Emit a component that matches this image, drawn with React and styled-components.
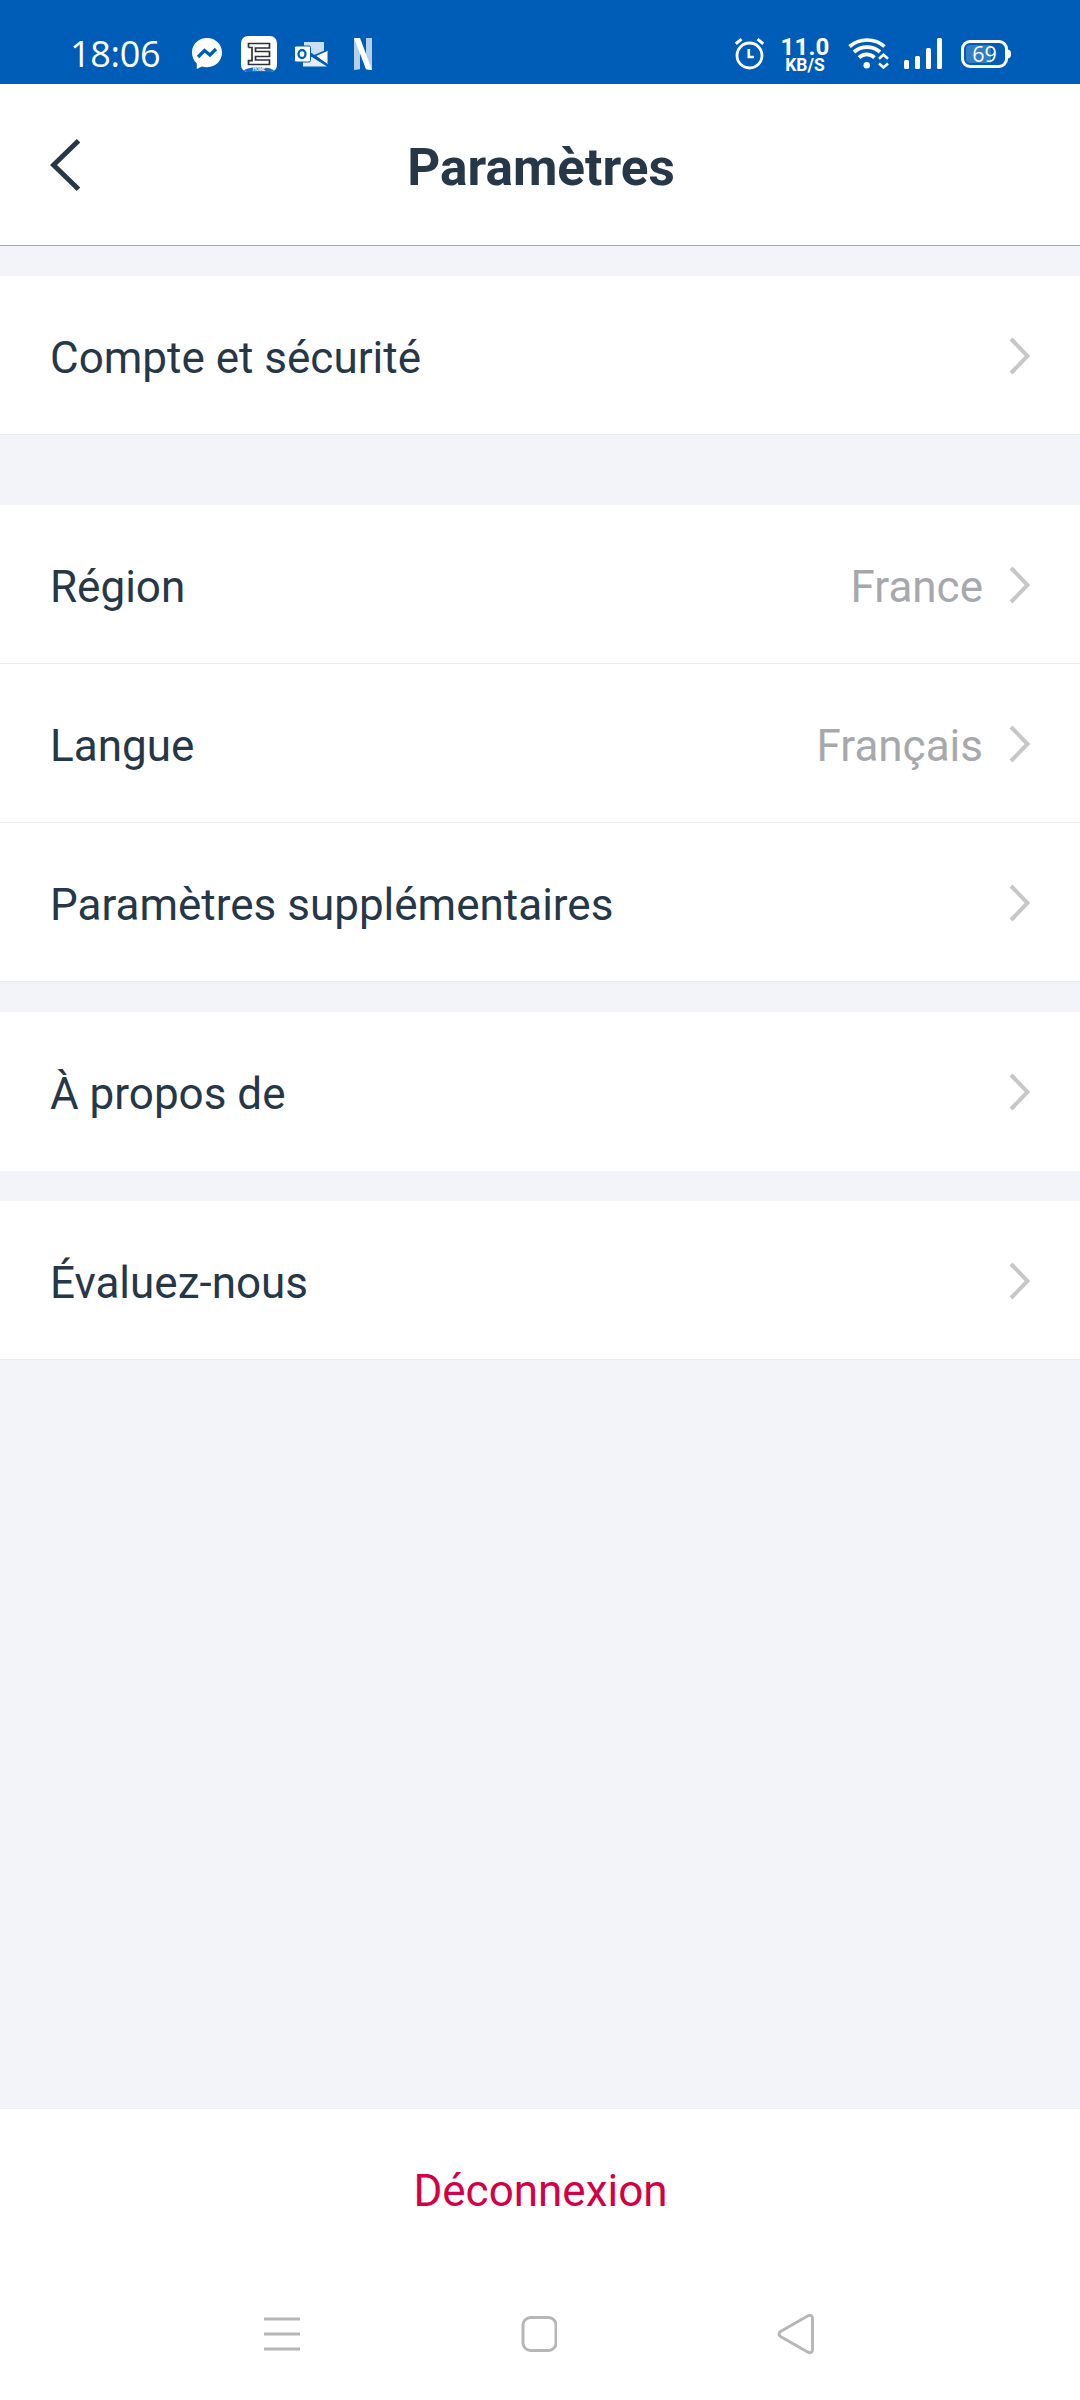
import React from 'react';
import styled, { createGlobalStyle } from 'styled-components';

const GlobalStyle = createGlobalStyle`
  * { box-sizing: border-box; }
  body {
    margin: 0;
    background: #f3f4f9;
    font-family: Roboto, "Liberation Sans", sans-serif;
  }
`;

const Screen = styled.div`
  display: flex;
  flex-direction: column;
  width: 1080px;
  height: 2400px;
  background: #f3f4f9;
  color: #263747;
  overflow: hidden;
`;

const StatusBar = styled.div`
  display: flex;
  justify-content: space-between;
  flex: none;
  height: 84px;
  padding: 24px 69px 0 70px;
  background: #005db7;
  color: #fff;
`;

const StatusGroup = styled.div`
  display: flex;
  align-items: center;
  height: 60px;
`;

const Clock = styled.span`
  width: 122px;
  font-family: "Open Sans", sans-serif;
  font-size: 36px;
  line-height: 60px;
  letter-spacing: -0.3px;
  white-space: nowrap;
`;

const StatusIcon = styled.svg`
  display: block;
  flex: none;
  margin-right: ${(p) => p.$gap || 0}px;
`;

const Speed = styled.div`
  display: flex;
  flex-direction: column;
  align-items: center;
  width: 50px;
  margin-right: 18px;
  font-weight: 700;
`;

const SpeedValue = styled.span`
  font-size: 24px;
  line-height: 22px;
  letter-spacing: 0.2px;
`;

const SpeedUnit = styled.span`
  font-size: 17.5px;
  line-height: 15px;
`;

const Header = styled.header`
  display: grid;
  grid-template-columns: 100px 1fr 100px;
  align-items: center;
  flex: none;
  height: 162px;
  border-bottom: 1px solid #a3a4a6;
  background: #fff;
`;

const BackButton = styled.button`
  display: flex;
  padding: 0 0 0 50px;
  border: 0;
  background: none;
`;

const Title = styled.h1`
  margin: 0;
  padding: 6px 0 0 2px;
  font-size: 51.3px;
  line-height: 60px;
  font-weight: 700;
  text-align: center;
`;

const Section = styled.section`
  flex: none;
  margin-top: ${(p) => p.$gap}px;
  background: #fff;
`;

const Row = styled.div`
  display: flex;
  align-items: center;
  height: 159px;
  padding: 0 50px;
  border-bottom: 1px solid ${(p) => (p.$plain ? '#fff' : '#eaebec')};
`;

const Label = styled.span`
  flex: 1;
  padding-top: 6px;
  font-size: 44px;
  line-height: 52px;
`;

const Value = styled.span`
  padding-top: 6px;
  margin-right: 26px;
  font-size: 44px;
  line-height: 52px;
  color: #a7a8ac;
`;

const ChevronIcon = styled.svg`
  display: block;
  flex: none;
  margin-bottom: -1px;
`;

const Footer = styled.footer`
  display: flex;
  flex-direction: column;
  flex: none;
  height: 292px;
  margin-top: auto;
  border-top: 1px solid #efeff2;
  background: #fff;
`;

const LogoutButton = styled.button`
  height: 160px;
  padding: 3px 0 0 1px;
  border: 0;
  background: none;
  color: #d40045;
  font-family: inherit;
  font-size: 44px;
  line-height: 52px;
`;

const NavBar = styled.nav`
  display: flex;
  justify-content: space-between;
  align-items: center;
  height: 130px;
  padding: 0 265px 0 264px;
`;

const NavIcon = styled.svg`
  display: block;
  fill: none;
  stroke: #b7b7b7;
  stroke-width: 3;
`;

const Chevron = () => (
  <ChevronIcon width="21" height="38" viewBox="0 0 21 38" fill="none">
    <path d="M2 2 18.5 19 2 36" stroke="#c7c7c7" strokeWidth="4" />
  </ChevronIcon>
);

const MessengerIcon = () => (
  <StatusIcon $gap={19} width="30" height="32" viewBox="0 0 30 32">
    <path fill="#fff" d="M15 0C6.500 0 0 6.200 0 14.600c0 4.400 1.800 8.200 4.800 10.800V31l5-2.600c1.600.5 3.400.8 5.200.8 8.500 0 15-6.200 15-14.600S23.500 0 15 0Z" />
    <path fill="none" stroke="#005db7" strokeWidth="3.200" d="m6 19 6.500-6.500 5.500 4.500 6-6" />
  </StatusIcon>
);

const BadgeText = styled.text`
  font: italic 700 4.500px Roboto, sans-serif;
  fill: #fff;
`;

const ShopIcon = () => (
  <StatusIcon $gap={17} width="36" height="36" viewBox="0 0 36 36">
    <rect width="36" height="36" rx="7" fill="#fff" />
    <path
      fill="none"
      stroke="#28323e"
      strokeWidth="1.700"
      d="M7.500 11.500v-4h21v4.500h-14v3.500h14v5h-14v3.500h14v4.500h-21v-3.800h3.500v-13.200H7.500"
    />
    <path fill="#1769c2" d="M3 34.500C7 30 29 30 33 34.500 31.500 36 30 36 29 36H7c-1 0-2.500 0-4-1.500Z" />
    <BadgeText x="18" y="35.300" textAnchor="middle">HOME</BadgeText>
  </StatusIcon>
);

const OutlookIcon = () => (
  <StatusIcon $gap={26} width="34" height="27" viewBox="0 0 34 27">
    <path fill="#fff" fillOpacity=".8" d="M10 1h20v10l-9 4-11-7Z" />
    <path fill="#fff" fillOpacity=".9" d="M9 16h9l3 2 12 7.500H9Z" />
    <path fill="#fff" d="m22 14.800 11.500-5.300v14Z" />
    <path fill="none" stroke="#005db7" strokeWidth="1.600" d="m16 12 17.500 12M20 15l13.500-6" />
    <rect x=".5" y="5" width="16" height="16" rx="1.500" fill="#fff" stroke="#005db7" strokeWidth="1" />
    <ellipse cx="8" cy="13" rx="3.500" ry="4" fill="none" stroke="#005db7" strokeWidth="2.300" />
  </StatusIcon>
);

const StreamIcon = () => (
  <StatusIcon width="18" height="32" viewBox="0 0 18 32">
    <path fill="#b3cfea" d="M0 0h6v31.300L0 32ZM12 0h6v32l-6-.7Z" />
    <path fill="#fff" d="M0 0h6l12 32-6-.7Z" />
  </StatusIcon>
);

const AlarmIcon = () => (
  <StatusIcon $gap={16} width="29" height="32" viewBox="0 0 29 32" fill="none" stroke="#fff">
    <circle cx="14.500" cy="17.500" r="12.500" strokeWidth="2.800" />
    <path strokeWidth="3" d="M.8 5.800 6.500 1.200M28.200 5.800l-5.700-4.600" />
    <path strokeWidth="2.600" d="M13.800 11v8H19" />
  </StatusIcon>
);

const WifiIcon = () => (
  <StatusIcon $gap={15} width="41" height="32" viewBox="0 0 41 32" fill="none" stroke="#fff">
    <path strokeWidth="3.700" d="M1.500 8.500c10-8.700 25.500-8.700 35 0M6 14c7.500-6.500 18.500-6.500 26 0M11 19.600c4.500-4.200 11-4.200 15.500 0" />
    <circle cx="18.700" cy="27.300" r="3.200" fill="#fff" stroke="none" />
    <path strokeWidth="2.600" d="m31 20.800 4.500-4 4.500 4M31 25.500l4.500 4 4.500-4" />
  </StatusIcon>
);

const SignalIcon = () => (
  <StatusIcon $gap={19} width="38" height="32" viewBox="0 0 38 32" fill="#fff">
    <rect x="0" y="22" width="5" height="9" rx="1.500" />
    <rect x="11" y="18" width="5" height="13" rx="1.500" />
    <rect x="22" y="10" width="5" height="21" rx="1.500" />
    <rect x="33" y="0" width="5" height="31" rx="1.500" />
  </StatusIcon>
);

const BatteryText = styled.text`
  font: 400 21.500px "Open Sans", sans-serif;
  fill: #fff;
`;

const BatteryIcon = () => (
  <StatusIcon width="50" height="28" viewBox="0 0 50 28">
    <rect x="1.500" y="1.500" width="44" height="25" rx="7.500" fill="none" stroke="#fff" strokeWidth="3" />
    <path fill="#337dc5" d="M9 5h21v18H9a4 4 0 0 1-4-4V9a4 4 0 0 1 4-4Z" />
    <path fill="#fff" d="M46 9.500c2.500 0 4 1 4 4.500s-1.500 4.500-4 4.500Z" />
    <BatteryText x="23.500" y="21.800" textAnchor="middle">69</BatteryText>
  </StatusIcon>
);

const SECTIONS = [
  { gap: 30, rows: [{ label: 'Compte et sécurité' }] },
  {
    gap: 70,
    rows: [
      { label: 'Région', value: 'France' },
      { label: 'Langue', value: 'Français' },
      { label: 'Paramètres supplémentaires' },
    ],
  },
  { gap: 30, rows: [{ label: 'À propos de', plain: true }] },
  { gap: 30, rows: [{ label: 'Évaluez-nous' }] },
];

export default function App() {
  return (
    <Screen>
      <GlobalStyle />
      <StatusBar>
        <StatusGroup>
          <Clock>18:06</Clock>
          <MessengerIcon />
          <ShopIcon />
          <OutlookIcon />
          <StreamIcon />
        </StatusGroup>
        <StatusGroup>
          <AlarmIcon />
          <Speed>
            <SpeedValue>11.0</SpeedValue>
            <SpeedUnit>KB/S</SpeedUnit>
          </Speed>
          <WifiIcon />
          <SignalIcon />
          <BatteryIcon />
        </StatusGroup>
      </StatusBar>
      <Header>
        <BackButton aria-label="Retour">
          <svg width="31" height="52" viewBox="0 0 31 52" fill="none">
            <path d="M28.500 1.800 3.500 26l25 24.200" stroke="#263747" strokeWidth="5" />
          </svg>
        </BackButton>
        <Title>Paramètres</Title>
      </Header>
      {SECTIONS.map((section, i) => (
        <Section key={i} $gap={section.gap}>
          {section.rows.map((row) => (
            <Row key={row.label} $plain={row.plain}>
              <Label>{row.label}</Label>
              {row.value && <Value>{row.value}</Value>}
              <Chevron />
            </Row>
          ))}
        </Section>
      ))}
      <Footer>
        <LogoutButton>Déconnexion</LogoutButton>
        <NavBar>
          <NavIcon width="36" height="34" viewBox="0 0 36 34">
            <path d="M0 2h36M0 17h36M0 32h36" />
          </NavIcon>
          <NavIcon width="36" height="36" viewBox="-0.5 0 36 36">
            <rect x="1.500" y="1.500" width="33" height="33" rx="7.500" />
          </NavIcon>
          <NavIcon width="38" height="42" viewBox="0 0 38 42">
            <path strokeLinejoin="round" d="M31 2.800 3.500 18.500q-3 2.500 0 5L31 39.200q4.500 1.800 4.500-3V5.800q0-4.800-4.500-3Z" />
          </NavIcon>
        </NavBar>
      </Footer>
    </Screen>
  );
}
